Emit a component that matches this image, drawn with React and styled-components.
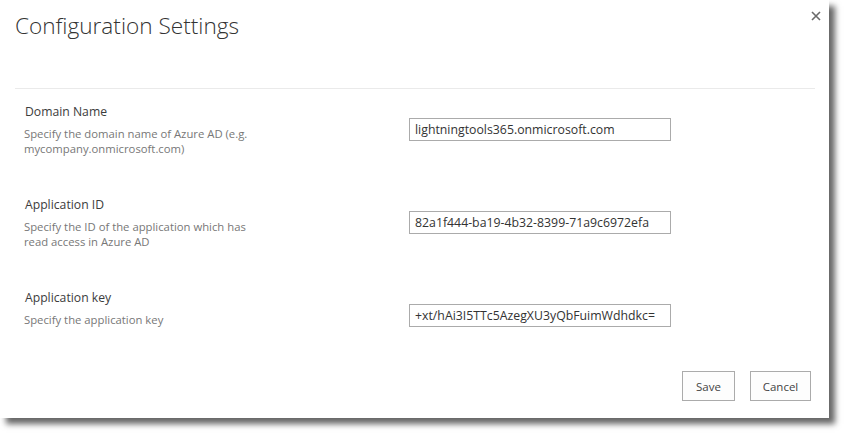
import React from "react";
import styled, { createGlobalStyle } from "styled-components";

const Global = createGlobalStyle`
  html, body { margin: 0; padding: 0; background: #ffffff; }
  body { font-family: "Open Sans", "Noto Sans", Arial, sans-serif; }
  * { box-sizing: border-box; }
`;

const Page = styled.div`
  width: 844px;
  height: 433px;
  background: #ffffff;
`;

const Dialog = styled.div`
  width: 829px;
  height: 418px;
  background: #ffffff;
  box-shadow: 6px 6px 6px rgba(0, 0, 0, 0.6);
  display: flex;
  flex-direction: column;
  position: relative;
`;

const Header = styled.div`
  height: 88px;
  padding: 12px 0 0 15px;
`;

const Title = styled.h1`
  margin: 0;
  font-family: "Open Sans", sans-serif;
  font-weight: 300;
  font-size: 22.6px;
  line-height: 28px;
  color: #333333;
`;

const CloseButton = styled.button`
  position: absolute;
  top: 9px;
  right: 6px;
  width: 14px;
  height: 14px;
  padding: 0;
  border: none;
  background: transparent;
  display: flex;
  align-items: center;
  justify-content: center;
`;

const Divider = styled.div`
  height: 1px;
  margin: 0 14px 0 15px;
  background: #eaeaea;
`;

const Body = styled.div`
  padding: 14px 0 0 24px;
  display: flex;
  flex-direction: column;
  gap: 40px;
`;

const Field = styled.div`
  display: grid;
  grid-template-columns: 385px 262px;
  align-items: start;
`;

const Info = styled.div`
  display: flex;
  flex-direction: column;
  gap: 5px;
`;

const Label = styled.div`
  padding-left: 1px;
  font-size: 12.2px;
  line-height: 18px;
  color: #3c3c3c;
`;

const Description = styled.div`
  max-width: 240px;
  font-size: 11.3px;
  line-height: 15px;
  color: #777777;
`;

const TextInput = styled.input`
  margin-top: 15px;
  width: 262px;
  height: 23px;
  padding: 0 5px;
  border: 1px solid #ababab;
  border-radius: 0;
  font-family: "Open Sans", sans-serif;
  font-size: 12.3px;
  color: #333333;
  background: #ffffff;
  outline: none;
`;

const Footer = styled.div`
  margin-top: auto;
  padding: 0 18px 17px 0;
  display: flex;
  justify-content: flex-end;
  gap: 15px;
`;

const Button = styled.button`
  height: 30px;
  min-width: ${(p) => p.$w}px;
  padding: 0 10px;
  border: 1px solid #ababab;
  background: #fdfdfd;
  font-family: "Open Sans", sans-serif;
  font-size: 11.5px;
  color: #444444;
  cursor: pointer;
`;

const fields = [
  {
    label: "Domain Name",
    desc: "Specify the domain name of Azure AD (e.g. mycompany.onmicrosoft.com)",
    value: "lightningtools365.onmicrosoft.com",
  },
  {
    label: "Application ID",
    desc: "Specify the ID of the application which has read access in Azure AD",
    value: "82a1f444-ba19-4b32-8399-71a9c6972efa",
  },
  {
    label: "Application key",
    desc: "Specify the application key",
    value: "+xt/hAi3I5TTc5AzegXU3yQbFuimWdhdkc=",
  },
];

export default function App() {
  return (
    <Page>
      <Global />
      <Dialog>
        <Header>
          <Title>Configuration Settings</Title>
        </Header>
        <CloseButton aria-label="Close">
          <svg width="10" height="10" viewBox="0 0 10 10">
            <path d="M1 1 L9 9 M9 1 L1 9" stroke="#6a6a6a" strokeWidth="1.6" />
          </svg>
        </CloseButton>
        <Divider />
        <Body>
          {fields.map((f) => (
            <Field key={f.label}>
              <Info>
                <Label>{f.label}</Label>
                <Description>{f.desc}</Description>
              </Info>
              <TextInput defaultValue={f.value} />
            </Field>
          ))}
        </Body>
        <Footer>
          <Button $w={53}>Save</Button>
          <Button $w={61}>Cancel</Button>
        </Footer>
      </Dialog>
    </Page>
  );
}
